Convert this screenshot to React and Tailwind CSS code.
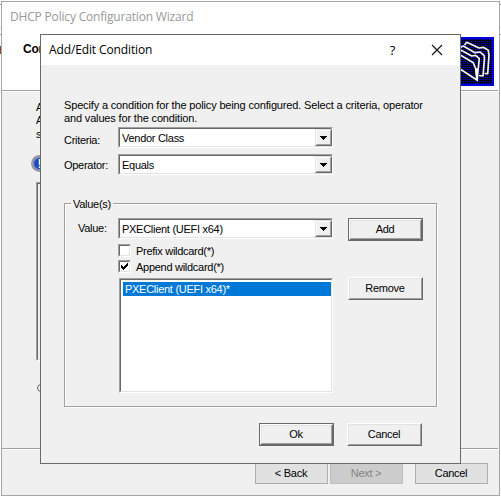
import React from "react";

const SUNKEN =
  "border border-t-[#a0a0a0] border-l-[#a0a0a0] border-r-white border-b-white";
const SUNKEN_INNER =
  "border border-t-[#696969] border-l-[#696969] border-r-[#e3e3e3] border-b-[#e3e3e3]";

function Combo({ value }) {
  return (
    <div className={`h-[21px] w-[215px] shrink-0 ${SUNKEN}`}>
      <div className={`flex h-full w-full justify-between bg-white ${SUNKEN_INNER}`}>
        <span className="pl-0.5 pt-px leading-[17px]">{value}</span>
        <div className="-mr-px flex h-[17px] w-[17px] shrink-0 border border-t-[#e3e3e3] border-l-[#e3e3e3] border-r-[#696969] border-b-[#696969] bg-[#f0f0f0]">
          <div className="flex flex-1 items-center justify-center border border-t-white border-l-white border-r-[#a0a0a0] border-b-[#a0a0a0]">
            <svg width="7" height="4" shapeRendering="crispEdges">
              <path d="M0 0h7v1h-7zM1 1h5v1h-5zM2 2h3v1h-3zM3 3h1v1h-1z" />
            </svg>
          </div>
        </div>
      </div>
    </div>
  );
}

function Check({ label, checked }) {
  return (
    <div className="flex h-[16px] items-center">
      <div className={`h-[13px] w-[13px] ${SUNKEN}`}>
        <div className={`flex h-full w-full items-center justify-center bg-white ${SUNKEN_INNER}`}>
          {checked && (
            <svg width="7" height="7" shapeRendering="crispEdges">
              <path d="M0 2h1v3h-1zM1 3h1v3h-1zM2 4h1v3h-1zM3 3h1v3h-1zM4 2h1v3h-1zM5 1h1v3h-1zM6 0h1v3h-1z" />
            </svg>
          )}
        </div>
      </div>
      <span className="ml-[5px] pt-[2px] leading-[13px]">{label}</span>
    </div>
  );
}

function Button({ children, primary }) {
  return (
    <div className={`h-[23px] w-[75px] shrink-0 ${primary ? "border border-[#696969]" : ""}`}>
      <div className="h-full w-full border border-t-white border-l-white border-r-[#696969] border-b-[#696969]">
        <div className="flex h-full w-full items-center justify-center border border-t-[#e3e3e3] border-l-[#e3e3e3] border-r-[#a0a0a0] border-b-[#a0a0a0]">
          <span className="pr-px leading-[13px]">{children}</span>
        </div>
      </div>
    </div>
  );
}

function FlatButton({ children, disabled, className = "" }) {
  return (
    <div
      className={`flex h-[21px] w-[73px] items-center justify-center border pr-px leading-[13px] ${
        disabled
          ? "border-[#bfbfbf] bg-[#cccccc] text-[#838383]"
          : "border-[#adadad] bg-[#e1e1e1]"
      } ${className}`}
    >
      {children}
    </div>
  );
}

// Every other pixel on every other row of a square area.
function dots(from, to) {
  const list = [];
  for (let y = from; y < to; y += 2) {
    for (let x = from; x < to; x += 2) list.push([x, y]);
  }
  return list;
}

const BLUE_DOTS = dots(2, 47);

function FoldersIcon() {
  return (
    <svg width="49" height="49" viewBox="0 0 49 49" className="shrink-0">
      <rect width="49" height="49" fill="#0000e0" />
      <rect x="2" y="2" width="45" height="45" fill="#000000" />
      {BLUE_DOTS.map(([x, y]) => (
        <rect key={`${x}-${y}`} x={x} y={y} width="1" height="1" fill="#0000ff" />
      ))}
      <g fill="none" stroke="#f4f4f4" strokeWidth="1.7" strokeLinejoin="round">
        <path d="M19.500 8L21.7 5.3L34 11L38.3 10.3L43.3 13.3L44 18.3L42.7 36.700L39.500 36.500" />
        <path d="M15 10.500L18.3 9L30 15.700L35 15L39 18.3L39.500 21L38 39L34 38.500" />
        <path d="M12 11L26.700 19L30.700 18.3L34.3 21.700L33.3 31" />
        <path d="M12 16L28.3 25.700L30.700 31.700L32.3 43.3L12 30" />
      </g>
      <path d="M30 31.500L34 31L33 44L31 42Z" fill="#ffffff" />
    </svg>
  );
}

function WizardWindow() {
  return (
    <div className="mt-px flex h-[495px] w-[499px] flex-col border border-[#a5a5a5] bg-[#f0f0f0]">
      <div className="h-[88px] bg-white">
        <div className="h-[30px] pl-2 pt-[5px] font-['Open_Sans','Noto_Sans',sans-serif] text-[12px] leading-[20px] tracking-[-0.18px] text-[#999999]">
          DHCP Policy Configuration Wizard
        </div>
        <div className="flex justify-between">
          <span className="pl-[21px] pt-[10px] text-[12px] leading-[14px] font-bold">Con</span>
          <div className="mr-[5px] mt-[5px] flex">
            <FoldersIcon />
          </div>
        </div>
      </div>
      <div className="mr-px h-[2px] shrink-0 border-t border-b border-t-[#a0a0a0] border-b-white" />
      <div className="h-[356px] shrink-0 pl-[34px] pt-[9px]">
        <div className="leading-[13px]">A</div>
        <div className="leading-[13px]">A</div>
        <div className="leading-[15px]">s</div>
        <div className="-ml-[5px] mt-[13px] flex h-[17px] w-[17px] items-center justify-center rounded-full border-2 border-[#999999] bg-[#2348b8] shadow-[inset_0_0_0_1px_#8fa3dc]">
          <span className="text-[13px] leading-[13px] font-bold text-white">!</span>
        </div>
        <div className={`mt-[10px] h-[179px] w-[380px] ${SUNKEN}`}>
          <div className={`h-full w-full ${SUNKEN_INNER}`} />
        </div>
        <div className="ml-px mt-[23px] h-[8px] w-[8px] rounded-full border border-[#666666]" />
      </div>
      <div className="mr-px h-[2px] shrink-0 border-t border-b border-t-[#a0a0a0] border-b-white" />
      <div className="flex pl-[253px] pt-[13px]">
        <FlatButton>&lt; Back</FlatButton>
        <FlatButton disabled className="ml-[2px]">Next &gt;</FlatButton>
        <FlatButton className="ml-[12px]">Cancel</FlatButton>
      </div>
    </div>
  );
}

function ConditionDialog() {
  return (
    <div className="absolute left-[40px] top-[34px] flex h-[430px] w-[421px] flex-col border border-[#6a6a6a] bg-[#f0f0f0]">
      <div className="flex h-[30px] shrink-0 items-center bg-white font-['Open_Sans','Noto_Sans',sans-serif] text-[12px]">
        <span className="flex-1 pl-2 leading-[20px] tracking-[-0.12px]">Add/Edit Condition</span>
        <span className="mr-[36px] text-[13px] leading-[20px]">?</span>
        <svg width="12" height="12" viewBox="0 0 12 12" className="mr-[17px]">
          <path d="M1 1L11 11M11 1L1 11" stroke="#111111" strokeWidth="1.1" />
        </svg>
      </div>
      <div className="pl-[23px] pt-[34px]">
        <p className="leading-[13px] tracking-[-0.155px] whitespace-nowrap">
          Specify a condition for the policy being configured. Select a criteria, operator
          <br />
          and values for the condition.
        </p>
        <div className="mt-[2px] flex">
          <span className="w-[54px] pt-[7px] leading-[13px]">Criteria:</span>
          <Combo value="Vendor Class" />
        </div>
        <div className="mt-[6px] flex">
          <span className="w-[54px] pt-[5px] leading-[13px]">Operator:</span>
          <Combo value="Equals" />
        </div>
        <div className="relative mt-[28px] h-[204px] w-[373px] border border-[#a0a0a0] pt-[14px] shadow-[1px_1px_0_#ffffff,inset_1px_1px_0_#ffffff]">
          <span className="absolute -top-[6px] left-[6px] bg-[#f0f0f0] px-[2px] leading-[13px]">Value(s)</span>
          <div className="flex pl-[13px]">
            <span className="w-[40px] pt-[4px] leading-[13px]">Value:</span>
            <Combo value="PXEClient (UEFI x64)" />
            <div className="ml-[15px]">
              <Button primary>Add</Button>
            </div>
          </div>
          <div className="mt-[1px] pl-[53px]">
            <Check label="Prefix wildcard(*)" />
            <Check label="Append wildcard(*)" checked />
          </div>
          <div className="mt-[3px] flex pl-[54px]">
            <div className={`mt-px h-[115px] w-[214px] shrink-0 ${SUNKEN}`}>
              <div className={`h-full w-full bg-white pl-[2px] pt-[2px] ${SUNKEN_INNER}`}>
                <div className="h-[14px] bg-[#0078d7] pl-[2px] leading-[14px] text-white">
                  PXEClient (UEFI x64)*
                </div>
              </div>
            </div>
            <div className="ml-[15px]">
              <Button>Remove</Button>
            </div>
          </div>
        </div>
        <div className="mt-[16px] flex gap-[13px] pl-[195px]">
          <Button primary>Ok</Button>
          <Button>Cancel</Button>
        </div>
      </div>
    </div>
  );
}

// Slivers of the window behind the wizard, one pixel wide on either side.
function Sliver({ accent }) {
  return (
    <div className="w-px shrink-0 pt-[4px]">
      <div className="h-px bg-[#a0a0a0]" />
      <div className="mt-[22px] h-px bg-[#d5d5d5]" />
      <div className="mt-[6px] h-px bg-[#a0a0a0]" />
      {accent && <div className="mt-[11px] h-[8px] bg-[#8a4a3a]" />}
    </div>
  );
}

export default function App() {
  return (
    <div className="relative flex h-[497px] w-[501px] overflow-hidden bg-white font-['Liberation_Sans',Arial,sans-serif] text-[11px] tracking-[-0.28px] text-black">
      <Sliver accent />
      <WizardWindow />
      <Sliver />
      <ConditionDialog />
    </div>
  );
}
